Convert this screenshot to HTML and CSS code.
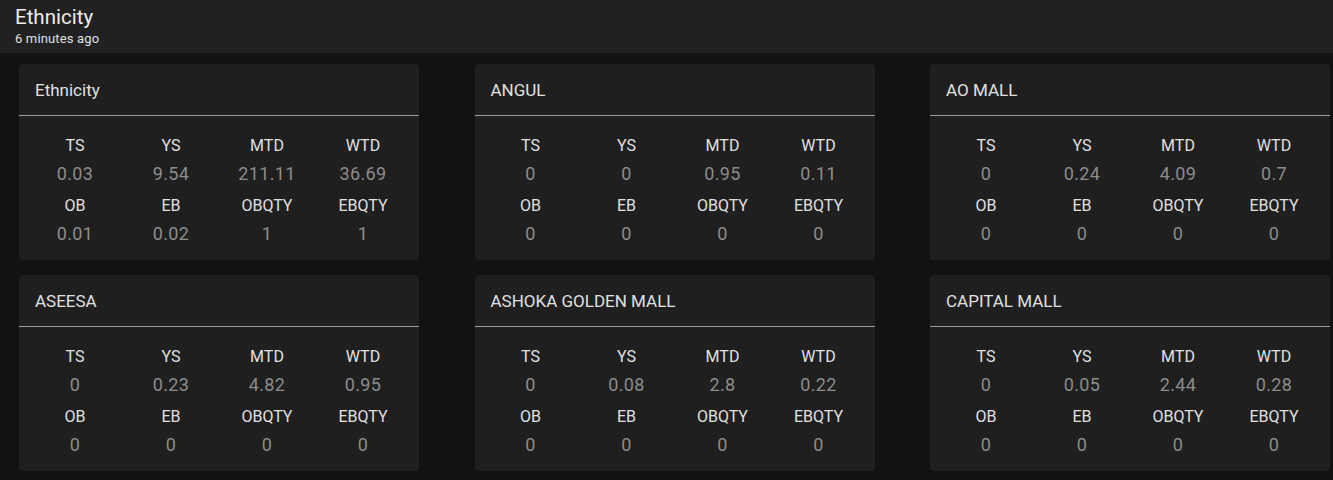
FILE: index.html
```html
<!DOCTYPE html>
<html>
<head>
<meta charset="utf-8">
<link rel="stylesheet" href="styles.css">
</head>
<body>
<header class="topbar">
  <div class="topbar-title">Ethnicity</div>
  <div class="topbar-sub">6 minutes ago</div>
</header>
<main class="grid">
  <section class="card">
    <div class="card-head">Ethnicity</div>
    <div class="stats">
      <div class="stat"><span class="lbl">TS</span><span class="val">0.03</span></div>
      <div class="stat"><span class="lbl">YS</span><span class="val">9.54</span></div>
      <div class="stat"><span class="lbl">MTD</span><span class="val">211.11</span></div>
      <div class="stat"><span class="lbl">WTD</span><span class="val">36.69</span></div>
      <div class="stat"><span class="lbl">OB</span><span class="val">0.01</span></div>
      <div class="stat"><span class="lbl">EB</span><span class="val">0.02</span></div>
      <div class="stat"><span class="lbl">OBQTY</span><span class="val">1</span></div>
      <div class="stat"><span class="lbl">EBQTY</span><span class="val">1</span></div>
    </div>
  </section>
  <section class="card">
    <div class="card-head">ANGUL</div>
    <div class="stats">
      <div class="stat"><span class="lbl">TS</span><span class="val">0</span></div>
      <div class="stat"><span class="lbl">YS</span><span class="val">0</span></div>
      <div class="stat"><span class="lbl">MTD</span><span class="val">0.95</span></div>
      <div class="stat"><span class="lbl">WTD</span><span class="val">0.11</span></div>
      <div class="stat"><span class="lbl">OB</span><span class="val">0</span></div>
      <div class="stat"><span class="lbl">EB</span><span class="val">0</span></div>
      <div class="stat"><span class="lbl">OBQTY</span><span class="val">0</span></div>
      <div class="stat"><span class="lbl">EBQTY</span><span class="val">0</span></div>
    </div>
  </section>
  <section class="card">
    <div class="card-head">AO MALL</div>
    <div class="stats">
      <div class="stat"><span class="lbl">TS</span><span class="val">0</span></div>
      <div class="stat"><span class="lbl">YS</span><span class="val">0.24</span></div>
      <div class="stat"><span class="lbl">MTD</span><span class="val">4.09</span></div>
      <div class="stat"><span class="lbl">WTD</span><span class="val">0.7</span></div>
      <div class="stat"><span class="lbl">OB</span><span class="val">0</span></div>
      <div class="stat"><span class="lbl">EB</span><span class="val">0</span></div>
      <div class="stat"><span class="lbl">OBQTY</span><span class="val">0</span></div>
      <div class="stat"><span class="lbl">EBQTY</span><span class="val">0</span></div>
    </div>
  </section>
  <section class="card">
    <div class="card-head">ASEESA</div>
    <div class="stats">
      <div class="stat"><span class="lbl">TS</span><span class="val">0</span></div>
      <div class="stat"><span class="lbl">YS</span><span class="val">0.23</span></div>
      <div class="stat"><span class="lbl">MTD</span><span class="val">4.82</span></div>
      <div class="stat"><span class="lbl">WTD</span><span class="val">0.95</span></div>
      <div class="stat"><span class="lbl">OB</span><span class="val">0</span></div>
      <div class="stat"><span class="lbl">EB</span><span class="val">0</span></div>
      <div class="stat"><span class="lbl">OBQTY</span><span class="val">0</span></div>
      <div class="stat"><span class="lbl">EBQTY</span><span class="val">0</span></div>
    </div>
  </section>
  <section class="card">
    <div class="card-head">ASHOKA GOLDEN MALL</div>
    <div class="stats">
      <div class="stat"><span class="lbl">TS</span><span class="val">0</span></div>
      <div class="stat"><span class="lbl">YS</span><span class="val">0.08</span></div>
      <div class="stat"><span class="lbl">MTD</span><span class="val">2.8</span></div>
      <div class="stat"><span class="lbl">WTD</span><span class="val">0.22</span></div>
      <div class="stat"><span class="lbl">OB</span><span class="val">0</span></div>
      <div class="stat"><span class="lbl">EB</span><span class="val">0</span></div>
      <div class="stat"><span class="lbl">OBQTY</span><span class="val">0</span></div>
      <div class="stat"><span class="lbl">EBQTY</span><span class="val">0</span></div>
    </div>
  </section>
  <section class="card">
    <div class="card-head">CAPITAL MALL</div>
    <div class="stats">
      <div class="stat"><span class="lbl">TS</span><span class="val">0</span></div>
      <div class="stat"><span class="lbl">YS</span><span class="val">0.05</span></div>
      <div class="stat"><span class="lbl">MTD</span><span class="val">2.44</span></div>
      <div class="stat"><span class="lbl">WTD</span><span class="val">0.28</span></div>
      <div class="stat"><span class="lbl">OB</span><span class="val">0</span></div>
      <div class="stat"><span class="lbl">EB</span><span class="val">0</span></div>
      <div class="stat"><span class="lbl">OBQTY</span><span class="val">0</span></div>
      <div class="stat"><span class="lbl">EBQTY</span><span class="val">0</span></div>
    </div>
  </section>
</main>
</body>
</html>
```
FILE: styles.css
```css
html, body {
  margin: 0;
  padding: 0;
  background: #121212;
  font-family: Roboto, "Noto Sans", sans-serif;
  color: #e0e0e0;
  overflow: hidden;
}
.topbar {
  background: #212121;
  height: 53px;
  box-sizing: border-box;
  padding: 4px 15px 0;
}
.topbar-title {
  font-size: 20.5px;
  line-height: 26px;
  color: #ececec;
}
.topbar-sub {
  font-size: 13px;
  letter-spacing: 0.15px;
  line-height: 18px;
  color: #e0e0e0;
}
.grid {
  display: grid;
  grid-template-columns: repeat(3, 400px);
  justify-content: space-between;
  row-gap: 15px;
  padding: 11px 3px 0 19px;
}
.card {
  background: #1f1f1f;
  border-radius: 4px;
  height: 196px;
  box-sizing: border-box;
}
.card-head {
  height: 52px;
  box-sizing: border-box;
  padding: 14px 16px 0;
  font-size: 17px;
  line-height: 24px;
  color: #e0e0e0;
  border-bottom: 1px solid #9a9a9a;
}
.stats {
  display: grid;
  grid-template-columns: repeat(4, 1fr);
  row-gap: 4px;
  padding: 19px 8px 6px;
}
.stat {
  display: flex;
  flex-direction: column;
  align-items: center;
}
.lbl {
  font-size: 16px;
  line-height: 22px;
  color: #e0e0e0;
}
.val {
  font-size: 18px;
  line-height: 34px;
  letter-spacing: 0.4px;
  color: #8c8c8c;
}
```
